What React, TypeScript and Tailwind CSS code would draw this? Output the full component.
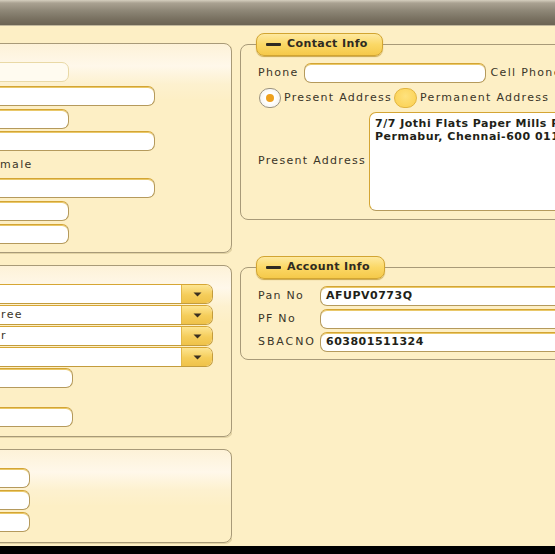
import React from "react";

const labelCls =
  "font-['DejaVu_Sans',sans-serif] text-[11px] tracking-[1.3px] text-[#3a3528] whitespace-nowrap";
const valueCls =
  "font-['DejaVu_Sans',sans-serif] font-bold text-[11px] tracking-[0.5px] text-[#221f18] whitespace-nowrap";

const panelBg =
  "bg-[linear-gradient(to_bottom,#fdf2d8_0px,#fff8ea_22px,#fdf1cf_40px,#fdefc5_56px)]";

interface BoxProps {
  w: number;
  mt?: number;
  faded?: boolean;
  children?: React.ReactNode;
  className?: string;
}

const Box = ({ w, mt = 0, faded, children, className = "" }: BoxProps) => (
  <div
    className={
      "h-[20px] shrink-0 rounded-[7px] border flex items-center px-[5px] " +
      (faded
        ? "bg-[#fffbf0] border-[#e9d9a6] "
        : "bg-white border-[#b59a5c] border-t-[#d4a534] shadow-[inset_0_1px_0_#e9c86a] ") +
      className
    }
    style={{ width: w, marginTop: mt }}
  >
    {children}
  </div>
);

// select starts 20px left of the panel's content edge so its text can be clipped like the shot
const Select = ({ mt = 0, text = "", textLeft = 0 }: { mt?: number; text?: string; textLeft?: number }) => (
  <div
    className="ml-[-20px] h-[20px] w-[252px] shrink-0 flex rounded-[7px] border border-[#c39c3c] border-t-[#d6a634] overflow-hidden bg-white"
    style={{ marginTop: mt }}
  >
    <div className="flex-1 flex items-center" style={{ paddingLeft: textLeft }}>
      <span className={labelCls}>{text}</span>
    </div>
    <div className="w-[31px] flex items-center justify-center border-l border-[#e2b84a] bg-[linear-gradient(to_bottom,#fde592,#f5cd5a_55%,#efc24a)]">
      <svg width="9" height="5" viewBox="0 0 9 5">
        <path d="M0.5 0.5h8L4.5 4.5z" fill="#3a3020" />
      </svg>
    </div>
  </div>
);

const Panel = ({
  children,
  mt = 0,
  className = "",
}: {
  children: React.ReactNode;
  mt?: number;
  className?: string;
}) => (
  <div
    className={
      "w-[352px] rounded-[8px] border border-[#a89a78] shadow-[1px_1px_0_#e2d3a4] flex flex-col pl-[100px] " +
      panelBg +
      " " +
      className
    }
    style={{ marginTop: mt }}
  >
    {children}
  </div>
);

const Legend = ({ title }: { title: string }) => (
  <legend className="ml-[15px] h-[23px] w-auto pl-[9px] pr-[14px] flex items-center rounded-[8px] border border-[#d2a532] bg-[linear-gradient(to_bottom,#fee9a0,#fbd866_50%,#f5c94a)] shadow-[0_1px_1px_#c9a64a]">
    <span className="w-[15px] h-[3px] rounded-[1px] bg-[#2e2a22] mr-[6px]" />
    <span className="font-['DejaVu_Sans',sans-serif] font-bold text-[11px] tracking-[0.4px] text-[#2e2a22]">
      {title}
    </span>
  </legend>
);

const App = () => {
  return (
    <div className="w-[555px] h-[554px] overflow-hidden flex flex-col bg-[#fdefc5]">
      <div className="h-[26px] shrink-0 bg-[linear-gradient(to_bottom,#d6cfbf_0px,#aaa292_3px,#8d8676_11px,#787060_19px,#6c6454_25px)] border-b border-[#c2b89e]" />

      <div className="flex-1 flex gap-[8px] overflow-hidden">
        {/* left column, partly cut off */}
        <div className="w-[232px] shrink-0 overflow-hidden pt-[17px]">
          <div className="ml-[-120px] w-[352px] flex flex-col">
            <Panel className="h-[210px] pt-[18px]">
              <Box w={88} faded />
              <Box w={174} mt={4} />
              <Box w={88} mt={3} />
              <Box w={174} mt={2} />
              <div className="h-[27px] flex items-center pl-[4px] pt-[2px]">
                <span className={labelCls}>Female</span>
              </div>
              <Box w={174} />
              <Box w={88} mt={3} />
              <Box w={88} mt={3} />
            </Panel>

            <Panel className="h-[172px] pt-[18px]" mt={12}>
              <Select />
              <Select mt={1} text="Degree" textLeft={13} />
              <Select mt={1} text="Other" textLeft={7} />
              <Select mt={1} />
              <Box w={92} mt={1} />
              <Box w={92} mt={19} />
            </Panel>

            <Panel className="h-[94px] pt-[18px]" mt={12}>
              <Box w={49} />
              <Box w={49} mt={2} />
              <Box w={49} mt={2} />
            </Panel>
          </div>
        </div>

        {/* right column, cut off at the right */}
        <div className="flex-1 overflow-hidden pt-[7px]">
          <div className="w-[420px]">
            <fieldset className="w-[420px] rounded-[8px] border border-[#a89a78] p-0">
              <Legend title="Contact Info" />
              <div className="pl-[17px] pb-[8px] flex flex-col">
                <div className="mt-[7px] flex items-center h-[20px]">
                  <span className={labelCls}>Phone</span>
                  <Box w={182} className="ml-[5px]" />
                  <span className={labelCls + " ml-[5px]"}>Cell Phone</span>
                </div>
                <div className="mt-[5px] flex items-center h-[20px]">
                  <div className="ml-[1px] w-[22px] h-[20px] rounded-full border-[1.5px] border-[#9b9380] bg-[radial-gradient(circle,#ffffff_40%,#efece4)] flex items-center justify-center">
                    <div className="w-[8px] h-[8px] rounded-full bg-[#eea11e]" />
                  </div>
                  <span className={labelCls + " ml-[3px]"}>Present Address</span>
                  <div className="ml-[2px] w-[23px] h-[20px] rounded-full border border-[#e2b540] bg-[radial-gradient(circle_at_50%_40%,#fee27e,#fbcf4e)]" />
                  <span className={labelCls + " ml-[3px]"}>Permanent Address</span>
                </div>
                <div className="mt-[4px] flex items-center">
                  <span className={labelCls + " w-[111px]"}>Present Address</span>
                  <div className="w-[240px] h-[99px] rounded-[7px] border border-[#b59a5c] border-t-[#d4a534] border-l-[#d4a534] bg-white pl-[5px] pt-[4px] leading-[13px] flex flex-col">
                    <span className={valueCls + " tracking-[0.2px]"}>7/7 Jothi Flats Paper Mills Road,</span>
                    <span className={valueCls + " tracking-[0.2px]"}>Permabur, Chennai-600 011</span>
                  </div>
                </div>
              </div>
            </fieldset>

            <fieldset className="mt-[36px] w-[420px] rounded-[8px] border border-[#a89a78] p-0">
              <Legend title="Account Info" />
              <div className="pl-[17px] pb-[7px] flex flex-col">
                <div className="mt-[7px] flex items-center">
                  <span className={labelCls + " w-[62px]"}>Pan No</span>
                  <Box w={300}>
                    <span className={valueCls}>AFUPV0773Q</span>
                  </Box>
                </div>
                <div className="mt-[3px] flex items-center">
                  <span className={labelCls + " w-[62px]"}>PF No</span>
                  <Box w={300} />
                </div>
                <div className="mt-[3px] flex items-center">
                  <span className={labelCls + " w-[62px] tracking-[1.9px]"}>SBACNO</span>
                  <Box w={300}>
                    <span className={valueCls}>603801511324</span>
                  </Box>
                </div>
              </div>
            </fieldset>
          </div>
        </div>
      </div>

      <div className="h-[8px] shrink-0 bg-black" />
    </div>
  );
};

export default App;
